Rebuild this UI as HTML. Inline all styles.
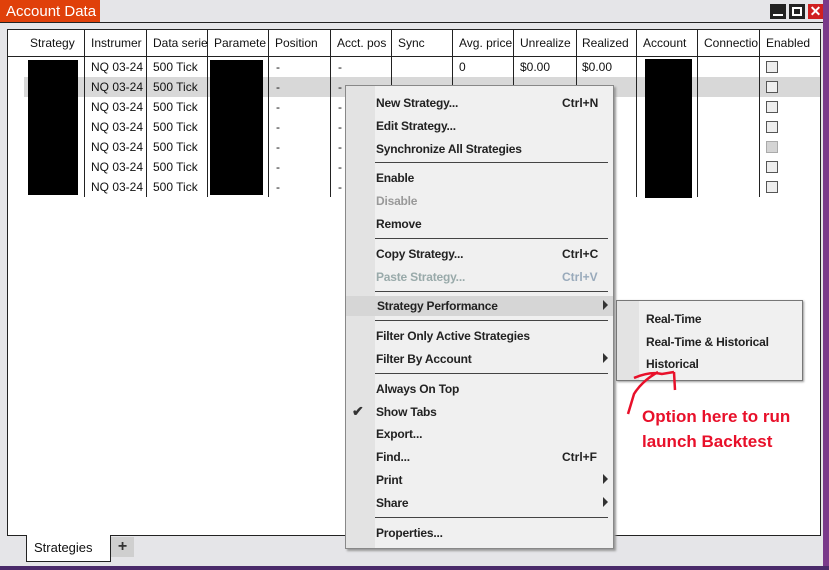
<!DOCTYPE html><html><head><style>
*{margin:0;padding:0;box-sizing:border-box}
body{width:829px;height:570px;background:#e5e5e8;position:relative;overflow:hidden;font-family:"Liberation Sans",sans-serif;font-size:12px;color:#111}
.a{position:absolute}
.t{position:absolute;white-space:nowrap}
.vl{position:absolute;top:30px;width:1px;background:#222}
.mi{position:absolute;left:376px;font-size:12px;font-weight:bold;color:#222;letter-spacing:-0.2px}
.sc{position:absolute;left:562px;font-size:12px;font-weight:bold;color:#222}
.sep{position:absolute;left:375px;width:233px;height:1px;background:#444}
.arr{position:absolute;left:603px;width:0;height:0;border-top:5px solid transparent;border-bottom:5px solid transparent;border-left:5px solid #333}
.cb{position:absolute;left:766px;width:12px;height:12px;border:1px solid #555;background:#eee}
</style></head><body>
<div class="a" style="left:0;top:0;width:100px;height:22px;background:#e0400a"></div>
<div class="t" style="left:6px;top:3px;font-size:15px;color:#fff">Account Data</div>
<div class="a" style="left:0;top:22px;width:823px;height:1px;background:#222"></div>
<div class="a" style="left:823px;top:0;width:6px;height:570px;background:#7a3a8a"></div>
<div class="a" style="left:0;top:566px;width:829px;height:4px;background:#4a2a6a"></div>
<div class="a" style="left:770px;top:4px;width:16px;height:15px;background:#222"></div><div class="a" style="left:773px;top:14px;width:10px;height:2px;background:#fff"></div>
<div class="a" style="left:789px;top:4px;width:16px;height:15px;background:#222"></div><div class="a" style="left:792px;top:7px;width:10px;height:9px;border:2px solid #fff"></div>
<div class="a" style="left:808px;top:4px;width:15px;height:15px;background:#d02020;color:#fff;font-weight:bold;font-size:14px;line-height:15px;text-align:center">✕</div>
<div class="a" style="left:7px;top:29px;width:814px;height:507px;background:#fff;border:1px solid #222"></div>
<div class="a" style="left:8px;top:56px;width:812px;height:1px;background:#222"></div>
<div class="a" style="left:24px;top:77px;width:796px;height:20px;background:#d8d8d8"></div>
<div class="vl" style="left:84px;height:167px"></div><div class="vl" style="left:146px;height:167px"></div><div class="vl" style="left:207px;height:167px"></div><div class="vl" style="left:268px;height:167px"></div><div class="vl" style="left:330px;height:167px"></div><div class="vl" style="left:391px;height:167px"></div><div class="vl" style="left:452px;height:167px"></div><div class="vl" style="left:513px;height:167px"></div><div class="vl" style="left:576px;height:167px"></div><div class="vl" style="left:636px;height:167px"></div><div class="vl" style="left:697px;height:167px"></div><div class="vl" style="left:759px;height:167px"></div>
<div class="t" style="left:30px;top:36px">Strategy</div><div class="t" style="left:91px;top:36px">Instrumer</div><div class="t" style="left:153px;top:36px">Data serie</div><div class="t" style="left:214px;top:36px">Paramete</div><div class="t" style="left:275px;top:36px">Position</div><div class="t" style="left:337px;top:36px">Acct. pos</div><div class="t" style="left:398px;top:36px">Sync</div><div class="t" style="left:459px;top:36px">Avg. price</div><div class="t" style="left:520px;top:36px">Unrealize</div><div class="t" style="left:582px;top:36px">Realized</div><div class="t" style="left:643px;top:36px">Account</div><div class="t" style="left:704px;top:36px">Connectio</div><div class="t" style="left:766px;top:36px">Enabled</div>
<div id="rows"></div>
<div class="a" style="left:28px;top:60px;width:50px;height:135px;background:#000"></div>
<div class="a" style="left:210px;top:60px;width:53px;height:135px;background:#000"></div>
<div class="a" style="left:645px;top:59px;width:47px;height:139px;background:#000"></div>
<div class="t" style="left:459px;top:60px">0</div><div class="t" style="left:520px;top:60px">$0.00</div><div class="t" style="left:582px;top:60px">$0.00</div>
<script>
var h='';for(var i=0;i<7;i++){var y=60+i*20;h+='<div class="t" style="left:91px;top:'+y+'px">NQ 03-24</div><div class="t" style="left:153px;top:'+y+'px">500 Tick</div><div class="t" style="left:276px;top:'+y+'px">-</div><div class="t" style="left:338px;top:'+y+'px">-</div><div class="cb" style="top:'+(y+1)+'px;'+(i==4?'background:#d4d4d4;border-color:#aaa':'')+'"></div>';}
document.getElementById('rows').innerHTML=h;
</script>
<div class="a" style="left:345px;top:85px;width:269px;height:464px;background:#f0f0f0;border:1px solid #888;box-shadow:2px 2px 2px #999"></div>
<div class="a" style="left:346px;top:86px;width:29px;height:462px;background:#e3e3e3"></div>
<div class="a" style="left:346px;top:296px;width:267px;height:20px;background:#d6d6d6"></div>
<div class="mi" style="top:96px">New Strategy...</div><div class="sc" style="top:96px">Ctrl+N</div>
<div class="mi" style="top:119px">Edit Strategy...</div>
<div class="mi" style="top:142px">Synchronize All Strategies</div>
<div class="sep" style="top:162px"></div>
<div class="mi" style="top:171px">Enable</div>
<div class="mi" style="top:194px;color:#999">Disable</div>
<div class="mi" style="top:217px">Remove</div>
<div class="sep" style="top:238px"></div>
<div class="mi" style="top:247px">Copy Strategy...</div><div class="sc" style="top:247px">Ctrl+C</div>
<div class="mi" style="top:270px;color:#9aa">Paste Strategy...</div><div class="sc" style="top:270px;color:#9ab">Ctrl+V</div>
<div class="sep" style="top:291px"></div>
<div class="mi" style="top:299px;left:377px">Strategy Performance</div><div class="arr" style="top:300px"></div>
<div class="sep" style="top:320px"></div>
<div class="mi" style="top:329px">Filter Only Active Strategies</div>
<div class="mi" style="top:352px">Filter By Account</div><div class="arr" style="top:353px"></div>
<div class="sep" style="top:373px"></div>
<div class="mi" style="top:382px">Always On Top</div>
<div class="t" style="left:352px;top:403px;font-size:14px;font-weight:bold;color:#333">✔</div>
<div class="mi" style="top:405px">Show Tabs</div>
<div class="mi" style="top:427px">Export...</div>
<div class="mi" style="top:450px">Find...</div><div class="sc" style="top:450px">Ctrl+F</div>
<div class="mi" style="top:473px">Print</div><div class="arr" style="top:474px"></div>
<div class="mi" style="top:496px">Share</div><div class="arr" style="top:497px"></div>
<div class="sep" style="top:517px"></div>
<div class="mi" style="top:526px">Properties...</div>
<div class="a" style="left:616px;top:300px;width:187px;height:81px;background:#f0f0f0;border:1px solid #777;box-shadow:1px 1px 2px #999"></div>
<div class="a" style="left:617px;top:301px;width:22px;height:79px;background:#e3e3e3"></div>
<div class="mi" style="left:646px;top:312px">Real-Time</div>
<div class="mi" style="left:646px;top:335px">Real-Time &amp; Historical</div>
<div class="mi" style="left:646px;top:357px">Historical</div>
<svg class="a" style="left:620px;top:366px" width="60" height="60"><path d="M14 12 Q30 5 42 8 L54 6 M38 6 Q22 15 14 28 L8 48 M54 6 L55 24" stroke="#e8102a" stroke-width="2.5" fill="none"/></svg>
<div class="t" style="left:642px;top:407px;font-size:17px;font-weight:bold;color:#e8102a">Option here to run</div>
<div class="t" style="left:642px;top:432px;font-size:17px;font-weight:bold;color:#e8102a">launch Backtest</div>
<div class="a" style="left:26px;top:535px;width:85px;height:27px;background:#fff;border:1px solid #222;border-top:none"></div>
<div class="t" style="left:34px;top:540px;font-size:13px">Strategies</div>
<div class="a" style="left:111px;top:537px;width:23px;height:20px;background:#cfcfcf;text-align:center;font-weight:bold;font-size:16px;line-height:20px;color:#333">+</div>
</body></html>
